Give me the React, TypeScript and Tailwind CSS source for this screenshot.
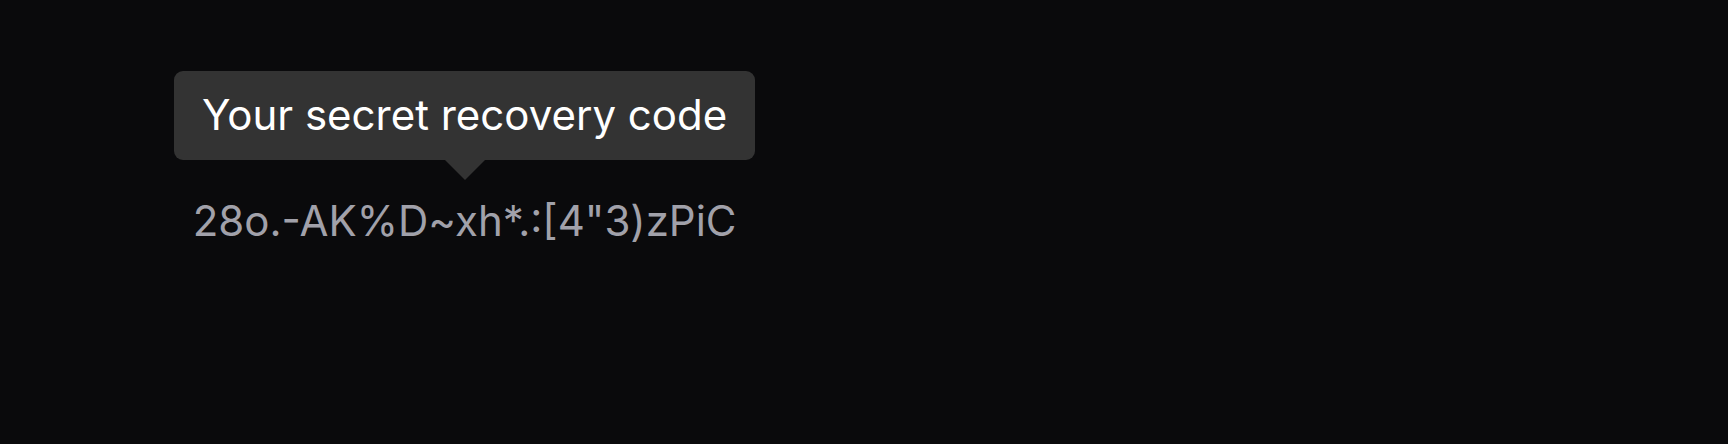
import React from "react";

export default function App() {
  return (
    <div
      className="h-[444px] w-full bg-[#0a0a0c] pt-[71px] pl-[174px]"
      style={{ fontFamily: "Inter, 'Noto Sans', sans-serif" }}
    >
      <div className="inline-flex flex-col items-center">
        <div className="relative rounded-[9px] bg-[#333333] px-[28px] pt-[19px] pb-[20px] text-[42px] leading-[50px] text-white">
          Your secret recovery code
          <div className="absolute left-1/2 top-full h-0 w-0 -translate-x-1/2 border-x-[20px] border-t-[20px] border-x-transparent border-t-[#333333]" />
        </div>
        <div className="mt-[36px] text-[42px] leading-[50px] text-[#a1a1aa]">
          28o.-AK%D~xh*.:[4"3)zPiC
        </div>
      </div>
    </div>
  );
}
